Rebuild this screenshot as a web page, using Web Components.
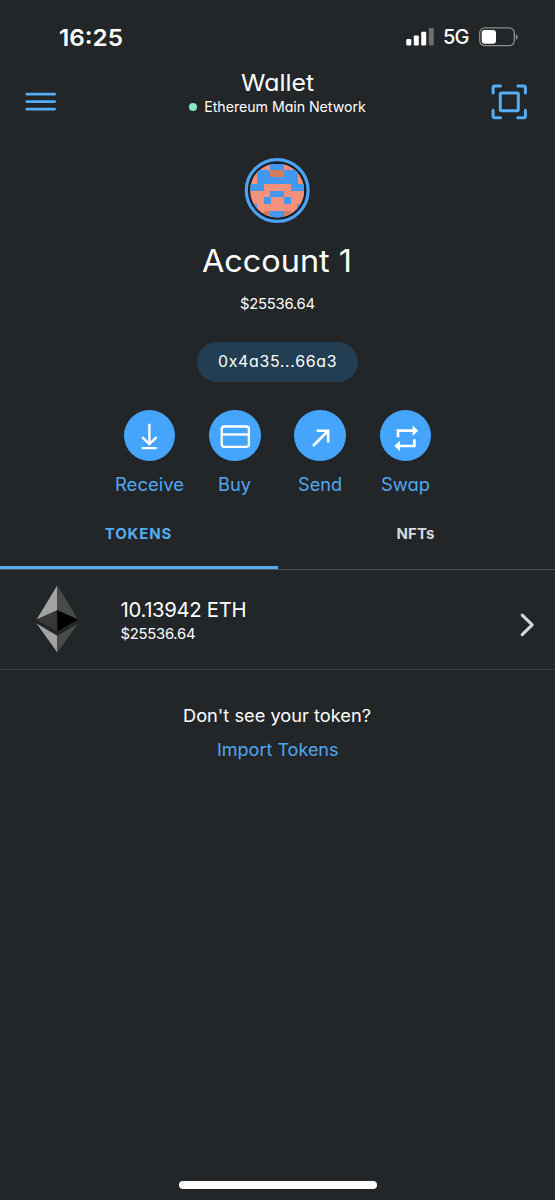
<!DOCTYPE html>
<html lang="en">
<head>
<meta charset="utf-8">
<title>Wallet</title>
<style>
html,body{margin:0;background:#222628}
body{width:555px;height:1200px;overflow:hidden;font-family:Inter,"Liberation Sans",sans-serif;font-feature-settings:"cv11";color:#fff}
</style>
</head>
<body>
<wallet-app></wallet-app>
<script>
const define = (name, html, setup) => customElements.define(name, class extends HTMLElement {
  connectedCallback() {
    if (this.shadowRoot) return;
    this.attachShadow({ mode: 'open' }).innerHTML = html;
    if (setup) setup(this, this.shadowRoot);
  }
});

/* One line of text that fills the given width: widened glyphs first (up to "stretch"), tracking for the rest. */
define('track-text', `<style>:host{display:block;white-space:nowrap;flex:none}span{display:inline-block;transform-origin:0 50%}</style><span><slot></slot></span>`, (el, root) => {
  const span = root.querySelector('span');
  el.style.fontSize = el.getAttribute('size') + 'px';
  el.style.fontWeight = el.getAttribute('weight') || 400;
  el.style.lineHeight = el.getAttribute('line') + 'px';
  const width = +el.getAttribute('width');
  const n = el.textContent.length - 1;
  const natural = span.getBoundingClientRect().width;
  const scale = Math.max(1, Math.min(width / natural, +(el.getAttribute('stretch') || 1.07)));
  const gap = (width / scale - natural) / n;
  span.style.letterSpacing = gap + 'px';
  span.style.marginRight = -gap + 'px';
  if (scale > 1) span.style.transform = `scaleX(${scale})`;
  el.style.width = width + 'px';
});

define('status-bar', `<style>
:host{display:flex;align-items:center;height:74px;padding:0 37px 0 59px;box-sizing:border-box}
.signal{margin-left:auto;margin-right:8.5px}.battery{margin-left:9.5px}svg{display:block;flex:none}
</style>
<track-text size="23.4" weight="600" line="29" width="64">16:25</track-text>
<svg class="signal" width="29" height="18" viewBox="0 0 29 18"><g fill="#fff"><rect x=".3" y="11" width="5" height="6.5" rx="1.2"/><rect x="7.8" y="7.4" width="5" height="10.1" rx="1.2"/><rect x="15.2" y="3.7" width="5" height="13.8" rx="1.2"/></g><rect x="22.8" y="0" width="5" height="17.5" rx="1.2" fill="#6c6e70"/></svg>
<track-text size="20" weight="500" line="30" width="26.5">5G</track-text>
<svg class="battery" width="39" height="20" viewBox="0 0 39 20"><rect x=".7" y=".9" width="34.6" height="17.8" rx="5" fill="none" stroke="#8b8d8f" stroke-width="1.3"/><rect x="2.7" y="2.9" width="14.3" height="13.8" rx="3" fill="#fff"/><path d="M36.8 6.9q2 .8 2 3t-2 3z" fill="#8b8d8f"/></svg>`);

define('wallet-header', `<style>
:host{display:grid;grid-template-columns:70px 1fr 70px;height:56px}
svg{display:block}.menu{margin:18px 0 0 25px}.scan{margin:10px 0 0 6px}
.title{display:flex;flex-direction:column;align-items:center}
.net{display:flex;align-items:center;gap:7px;height:28px}
i{width:8px;height:8px;border-radius:50%;background:#86e8c3}
.name{height:24px;margin-top:-5px}
</style>
<svg class="menu" width="32" height="20" viewBox="0 0 32 20" stroke="#56adf3" stroke-width="2.6" stroke-linecap="round"><path d="M1.7 2.1H29.7M1.7 9.6H29.7M1.7 17.1H29.7"/></svg>
<div class="title"><div class="name"><track-text size="23.5" line="28" width="73">Wallet</track-text></div>
<div class="net"><i></i><track-text size="14.2" line="28" width="161.5">Ethereum Main Network</track-text></div></div>
<svg class="scan" width="37" height="36" viewBox="0 0 37 36" fill="none" stroke="#56adf3" stroke-width="3" stroke-linecap="round" stroke-linejoin="round"><path d="M2.1 9V3.8Q2.1 2 3.9 2H9.5M26.8 2h5.8q1.8 0 1.8 1.8V9M34.4 26.2v5.7q0 1.8-1.8 1.8h-5.8M9.5 33.7H3.9q-1.8 0-1.8-1.8v-5.7"/><rect x="9.3" y="9" width="18" height="17.8" rx="1.2"/></svg>`);

define('account-avatar', `<style>:host{display:block;width:66px;height:66px}svg{display:block}</style>
<svg width="66" height="66" viewBox="0 0 66 66"><defs><clipPath id="c"><circle cx="33.2" cy="33.5" r="27.1"/></clipPath></defs>
<circle cx="33.2" cy="33.5" r="30.9" fill="#182028" stroke="#4ba4f6" stroke-width="3.2"/>
<g clip-path="url(#c)"><g id="cells" transform="translate(6.2 6.5)" shape-rendering="crispEdges"></g></g></svg>`, (el, root) => {
  const rows = ['...BB...', '.BBOOBB.', '.BBBBBB.', 'BB....BB', '...BB...', '..B..B..', 'B......B', '..OBBO..'];
  const color = { '.': '#f3917c', B: '#4298ef', O: '#d57b58' };
  root.querySelector('#cells').innerHTML = '<rect width="54" height="54" fill="#f3917c"/>' + rows.map((r, y) => [...r].map((c, x) =>
    c === '.' ? '' : `<rect x="${x * 6.75}" y="${y * 6.75}" width="6.85" height="6.85" fill="${color[c]}"/>`).join('')).join('');
});

define('account-summary', `<style>
:host{display:flex;flex-direction:column;align-items:center;padding-top:27px;height:279.5px;box-sizing:border-box}
account-avatar{margin-right:1px}
.name{margin-top:17.5px;margin-right:1px}.fiat{margin-top:11.5px}
.pill{margin-top:27px;width:161px;height:39.5px;border-radius:20px;background:#233d52;display:flex;align-items:center;justify-content:center}
</style>
<account-avatar></account-avatar>
<track-text class="name" size="31.3" line="41" width="150">Account 1</track-text>
<track-text class="fiat" size="14.8" line="22" width="75">$25536.64</track-text>
<div class="pill"><track-text size="15.6" line="25" width="118.5" stretch="1.02">0x4a35...66a3</track-text></div>`);

define('action-button', `<style>
:host{display:flex;flex-direction:column;align-items:center;width:85.4px;color:#51a8f3}
.disc{width:51.6px;height:51.6px;border-radius:50%;background:#45a4fc;margin-bottom:12.2px}
::slotted(svg){display:block;width:51.6px;height:51.6px}
</style><div class="disc"><slot name="icon"></slot></div><slot></slot>`);

define('action-row', `<style>:host{display:flex;justify-content:center;height:90.5px}svg{fill:none;stroke:#fff;stroke-width:2.3}</style>
<action-button><svg slot="icon" viewBox="0 0 51.6 51.6"><path d="M25.4 13.7V34M18.2 27.2l7.2 7 7.2-7M17.7 38.1h15"/></svg><track-text size="18" line="24" width="69">Receive</track-text></action-button>
<action-button><svg slot="icon" viewBox="0 0 51.6 51.6"><rect x="12.7" y="16.5" width="27.2" height="20.4" rx="2.6"/><path d="M12.7 24.5h27.2"/></svg><track-text size="18" line="24" width="33">Buy</track-text></action-button>
<action-button><svg slot="icon" viewBox="0 0 51.6 51.6"><path stroke-width="2.6" d="M19 36L34 21M22.7 20.7H34.2V32.5"/></svg><track-text size="18" line="24" width="44">Send</track-text></action-button>
<action-button><svg slot="icon" viewBox="0 0 51.6 51.6"><path stroke-width="2.7" d="M18 27.3V20.7H33.3M34.4 29.3V36H19"/><path stroke="none" fill="#fff" d="M32.6 15.4l5.7 5.3-5.7 5.3zM20 30.7l-5.7 5.3 5.7 5.3z"/></svg><track-text size="18" line="24" width="49">Swap</track-text></action-button>`);

define('wallet-tabs', `<style>
:host{display:grid;grid-template-columns:1fr 1fr;height:70px;box-sizing:border-box;border-bottom:1px solid #505356}
div{display:flex;flex-direction:column;align-items:center;padding-top:22px;box-sizing:border-box;height:69px}
.on{color:#55adf2;border-bottom:3px solid #55adf2}.off{color:#d3d8dd}
track-text{margin-right:1.5px}
</style><div class="on"><track-text size="15" weight="700" line="24" width="66.5" stretch="1">TOKENS</track-text></div>
<div class="off"><track-text size="15" weight="700" line="24" width="38" stretch="1">NFTs</track-text></div>`);

define('token-row', `<style>
:host{display:flex;height:100px;box-sizing:border-box;border-bottom:1px solid #393c3f;padding:0 20px 0 36px}
svg{display:block;flex:none}.eth{margin-top:15px}.text{margin:26px 0 0 41.5px}.chev{margin:42.5px 0 0 auto}
</style>
<svg class="eth" width="43" height="68" viewBox="0 0 43 68"><path fill="#a2a3a3" d="M21.3.3.6 34.5l20.7-9.3z"/><path fill="#494a4a" d="M21.3.3v24.9L42 34.5z"/><path fill="#383837" d="M.6 34.5l20.7-9.3v21.1z"/><path fill="#000" d="M21.3 25.2L42 34.5 21.3 46.3z"/><path fill="#a2a3a3" d="M.6 38.6l20.7 12.1v16.8z"/><path fill="#494a4a" d="M42 38.6L21.3 50.7v16.8z"/></svg>
<div class="text"><track-text size="20.3" line="27" width="126">10.13942 ETH</track-text><track-text size="14.8" line="22" width="75">$25536.64</track-text></div>
<svg class="chev" width="15" height="24" viewBox="0 0 15 24" fill="none" stroke="#d3d6da" stroke-width="3.1" stroke-linecap="round" stroke-linejoin="round"><path d="M2.2 2.2l10 9.7-10 9.7"/></svg>`);

define('import-prompt', `<style>:host{display:flex;flex-direction:column;align-items:center;padding-top:34px}
track-text{margin-right:1px}.link{color:#51a8ef;margin-top:10px;margin-right:0}</style>
<track-text size="17.4" line="24" width="188">Don't see your token?</track-text>
<track-text class="link" size="17.4" line="24" width="121.5">Import Tokens</track-text>`);

define('wallet-app', `<style>
:host{display:flex;flex-direction:column;width:555px;height:1200px;background:#222628}
.home{width:198px;height:8px;border-radius:4px;background:#fff;margin:auto auto 11px 179px}
</style>
<status-bar></status-bar><wallet-header></wallet-header><account-summary></account-summary>
<action-row></action-row><wallet-tabs></wallet-tabs><token-row></token-row><import-prompt></import-prompt>
<div class="home"></div>`);
</script>
</body>
</html>
